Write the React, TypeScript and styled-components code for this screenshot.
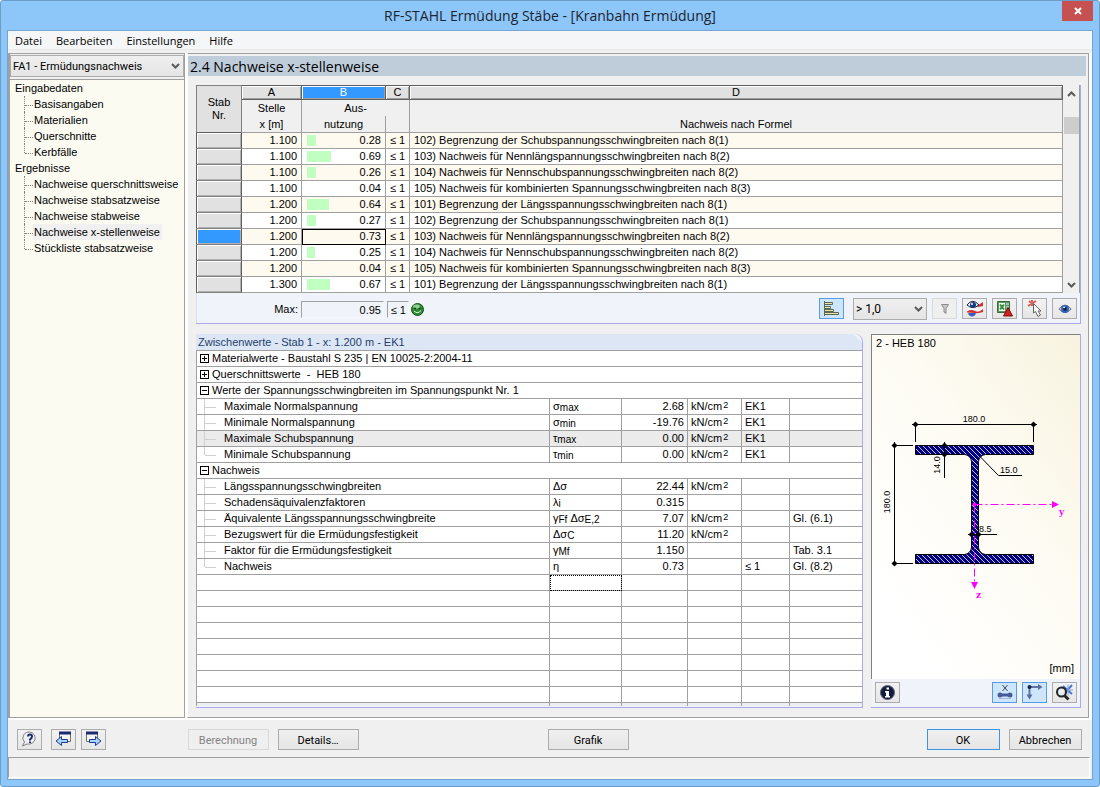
import React from "react";
import styled, { createGlobalStyle, css } from "styled-components";

const GlobalStyle = createGlobalStyle`
  * { box-sizing: border-box; }
  body {
    margin: 0;
    background: #ffffff;
    color: #000000;
    font-family: "Liberation Sans", Arial, sans-serif;
    font-size: 11px;
    line-height: 15px;
  }
  button, select { font: inherit; color: inherit; }
`;

const uiFont = css`
  font-family: "Open Sans", "Noto Sans", sans-serif;
`;

const controlFont = css`
  font-family: Roboto, "Liberation Sans", sans-serif;
`;

/* ---------- window frame ---------- */

const Frame = styled.div`
  min-height: 100vh;
  display: flex;
  flex-direction: column;
  background: #8dc6f9;
  border: 1px solid #6b9dc9;
  border-radius: 3px;
  padding: 0 6px 6px;
`;

const TitleBar = styled.header`
  height: 29px;
  display: grid;
  grid-template-columns: 31px 1fr 31px;
  align-items: start;
`;

const WindowTitle = styled.h1`
  ${uiFont}
  grid-column: 2;
  margin: 0;
  font-size: 14px;
  font-weight: 400;
  line-height: 29px;
  text-align: center;
  white-space: nowrap;
  color: #1c2430;
`;

const CloseButton = styled.button`
  height: 20px;
  padding: 0;
  border: 0;
  background: #c75050;
  display: flex;
  align-items: center;
  justify-content: center;
`;

const Client = styled.div`
  flex: 1;
  display: flex;
  flex-direction: column;
  border: 1px solid #74a5d0;
  background: #f0f0f0;
`;

const MenuBar = styled.nav`
  ${uiFont}
  height: 19px;
  display: flex;
  align-items: center;
  gap: 14px;
  padding: 2px 7px 0;
  background: #f5f6f7;
  border-bottom: 1px solid #e8e8e8;
`;

const MenuLink = styled.a`
  font-size: 11px;
  line-height: 16px;
  color: #000000;
  text-decoration: none;
`;

const Workspace = styled.div`
  flex: 1;
  display: flex;
  gap: 2px;
  margin-top: 3px;
  padding-right: 3px;
  background: #ffffff;
  border-bottom: 2px solid #ffffff;
`;

/* ---------- navigation ---------- */

const Sidebar = styled.aside`
  width: 177px;
  flex: none;
  display: flex;
  flex-direction: column;
  background: #f0f0f0;
  border: 1px solid #a0a0a0;
  border-left-width: 2px;
`;

const SelectBox = styled.div<{ $width?: number }>`
  position: relative;
  width: ${(p) => (p.$width ? `${p.$width}px` : "100%")};
  height: 22px;
  svg {
    position: absolute;
    right: 4px;
    top: 8px;
    pointer-events: none;
  }
`;

const Select = styled.select<{ $large?: boolean }>`
  ${controlFont}
  appearance: none;
  width: 100%;
  height: 100%;
  margin: 0;
  padding: 1px 16px 0 2px;
  border: 1px solid #acacac;
  border-radius: 0;
  background: linear-gradient(#f0f0f0, #e4e4e4);
  font-size: ${(p) => (p.$large ? 12 : 11)}px;
`;

const CaseChooser = styled.div`
  padding: 1px 0 2px;
  border-bottom: 1px solid #a0a0a0;
`;

const Tree = styled.ul`
  flex: 1;
  margin: 0;
  padding: 0 0 0 5px;
  list-style: none;
  background: #fbfbf2;
  line-height: 16px;
`;

const Branch = styled.ul`
  margin: 0;
  padding: 0 0 0 9px;
  list-style: none;
`;

const Leaf = styled.li`
  display: flex;
  height: 16px;
`;

const Twig = styled.span<{ $last: boolean }>`
  width: 9px;
  height: ${(p) => (p.$last ? 9 : 16)}px;
  border-left: 1px dotted #808080;
  &::after {
    content: "";
    display: block;
    height: 9px;
    border-bottom: 1px dotted #808080;
  }
`;

const LeafLink = styled.a<{ $active: boolean }>`
  padding: 0 2px 0 1px;
  color: #000000;
  text-decoration: none;
  white-space: nowrap;
  background: ${(p) => (p.$active ? "#f0f0f0" : "transparent")};
`;

/* ---------- main panel ---------- */

const Main = styled.main`
  flex: 1;
  min-width: 0;
  display: flex;
  flex-direction: column;
  background: #f0f0f0;
  border-top: 1px solid #a0a0a0;
  border-right: 1px solid #a0a0a0;
  border-bottom: 1px solid #a0a0a0;
  border-left: 1px solid #ffffff;
`;

const Heading = styled.h2`
  ${uiFont}
  height: 20px;
  margin: 2px 2px 9px 0;
  padding-left: 2px;
  background: #bfcddb;
  font-size: 14px;
  font-weight: 400;
  line-height: 21px;
`;

const PanelArea = styled.div`
  flex: 1;
  display: flex;
  flex-direction: column;
  gap: 10px;
  padding: 0 7px 9px 8px;
`;

const ResultPanel = styled.section`
  background: #f0f4fa;
  border-right: 1px solid #a9a9ec;
  border-bottom: 1px solid #a9a9ec;
`;

const GridRow = styled.div`
  display: flex;
`;

const Grid = styled.table`
  width: 100%;
  table-layout: fixed;
  border-collapse: separate;
  border-spacing: 0;
  td, th {
    padding: 0;
    font-weight: 400;
    white-space: nowrap;
    overflow: hidden;
  }
`;

const LetterCell = styled.th<{ $active?: boolean }>`
  height: 15px;
  line-height: 13px;
  border: 1px solid #606060;
  border-left: 0;
  background: ${(p) => (p.$active ? "#3399ff" : "#e1e1e1")};
  color: ${(p) => (p.$active ? "#ffffff" : "#000000")};
  box-shadow: inset 1px 1px #ffffff, inset -1px -1px #a0a0a0;
`;

const CornerCell = styled.th`
  border: 1px solid #808080;
  border-bottom-color: #606060;
  background: #e1e1e1;
  line-height: 13px;
`;

const CaptionCell = styled.th<{ $bottom?: boolean }>`
  height: ${(p) => (p.$bottom ? 17 : 16)}px;
  line-height: 14px;
  background: #f0f0f0;
  border-right: 1px solid #a0a0a0;
  border-bottom: ${(p) => (p.$bottom ? "1px solid #a0a0a0" : "0")};
`;

const RowHead = styled.th<{ $active: boolean }>`
  height: 16px;
  background: ${(p) => (p.$active ? "#3399ff" : "#e1e1e1")};
  border: 1px solid #606060;
  border-top: 0;
  border-bottom-color: #808080;
  box-shadow: inset 1px 1px #ffffff, inset -1px -1px #b0b0b0;
`;

const Cell = styled.td<{ $odd: boolean; $align?: string; $current?: boolean }>`
  height: 16px;
  line-height: 15px;
  border-right: 1px solid #a0a0a0;
  border-bottom: 1px solid #a0a0a0;
  background: ${(p) => (p.$odd ? "#fffaf0" : "#ffffff")};
  text-align: ${(p) => p.$align ?? "left"};
  && {
    padding: 0 4px;
  }
  ${(p) => p.$current && "outline: 1px solid #000000; outline-offset: -1px;"}
`;

const Gauge = styled.div`
  display: flex;
  align-items: center;
  justify-content: space-between;
  padding-left: 1px;
`;

const GaugeBar = styled.span`
  height: 11px;
  background: #c0ffc0;
`;

const ScrollTrack = styled.div`
  width: 17px;
  flex: none;
  display: flex;
  flex-direction: column;
  align-items: center;
  padding: 6px 0 5px;
  background: #f0f0f0;
  border-right: 1px solid #a0a0a0;
`;

const ScrollThumb = styled.div`
  width: 15px;
  height: 17px;
  margin: 20px 0 auto;
  background: #cdcdcd;
`;

const Summary = styled.div`
  height: 30px;
  display: flex;
  align-items: center;
  padding: 2px 3px 0 0;
  border-left: 1px solid #d6e0f2;
`;

const SummaryLabel = styled.span`
  width: 101px;
  text-align: right;
`;

const SummaryField = styled.output<{ $width: number }>`
  width: ${(p) => p.$width}px;
  height: 17px;
  margin-left: 3px;
  padding-right: 2px;
  border: 1px solid #f8f8fc;
  border-top-color: #a0a0a0;
  border-left-color: #a0a0a0;
  text-align: right;
  line-height: 16px;
`;

const StatusIcon = styled.span`
  display: flex;
  margin-left: 2px;
`;

const Tools = styled.div`
  display: flex;
  gap: 5px;
  margin-left: auto;
`;

const IconButton = styled.button<{ $pressed?: boolean }>`
  width: 25px;
  height: 21px;
  padding: 0;
  display: flex;
  align-items: center;
  justify-content: center;
  border: 1px solid ${(p) => (p.$pressed ? "#569de5" : "#acacac")};
  background: ${(p) => (p.$pressed ? "#cde6fc" : "linear-gradient(#f2f2f2, #e6e6e6)")};
  &:disabled {
    border-color: #d9d9d9;
    background: #efefef;
  }
`;

const FilterBox = styled.div`
  margin: 0 0 0 4px;
`;

/* ---------- intermediate values ---------- */

const LowerArea = styled.div`
  flex: 1;
  display: flex;
  gap: 8px;
`;

const DetailPanel = styled.section`
  flex: 1;
  min-width: 0;
  padding-bottom: 1px;
  border-right: 1px solid #a9a9ec;
  border-bottom: 1px solid #a9a9ec;
  border-top-right-radius: 8px;
  background: #f0f4fa;
`;

const DetailTitle = styled.h3`
  height: 17px;
  margin: 0;
  padding-left: 2px;
  background: #dce6f4;
  border-bottom: 1px solid #a0a0a0;
  color: #1f3f6e;
  font-size: 11px;
  font-weight: 400;
  line-height: 17px;
  clip-path: polygon(0 0, calc(100% - 9px) 0, 100% 9px, 100% 100%, 0 100%);
`;

const DetailCell = styled.td<{ $shaded?: boolean; $align?: string; $focus?: boolean; $last?: boolean }>`
  height: 16px;
  line-height: 15px;
  vertical-align: top;
  border-right: ${(p) => (p.$last ? "0" : "1px solid #a0a0a0")};
  border-bottom: 1px solid #a0a0a0;
  background: ${(p) => (p.$shaded ? "#ebebeb" : "#ffffff")};
  text-align: ${(p) => p.$align ?? "left"};
  && {
    padding: 0 3px;
  }
  &:first-child {
    border-left: 1px solid #a0a0a0;
  }
  ${(p) => p.$focus && "outline: 1px dotted #000000; outline-offset: -1px;"}
  sup, sub {
    line-height: 1px;
    vertical-align: baseline;
    position: relative;
  }
  sup { bottom: 2px; font-size: 9px; padding-left: 1px; }
  sub { top: 1px; font-size: 10px; }
`;

const FooterCell = styled(DetailCell)`
  height: 3px;
  border-bottom: 0;
  background: #eceff2;
`;

const GroupLine = styled.div`
  display: flex;
  align-items: center;
  gap: 3px;
  height: 15px;
`;

const GroupName = styled.span`
  white-space: pre;
`;

const ItemLine = styled.div`
  display: flex;
  height: 15px;
  padding-left: 4px;
`;

const ItemTwig = styled.span<{ $last: boolean }>`
  width: 20px;
  height: ${(p) => (p.$last ? 8 : 15)}px;
  border-left: 1px solid #d0d0d0;
  &::after {
    content: "";
    display: block;
    width: 11px;
    height: 8px;
    border-bottom: 1px solid #d0d0d0;
  }
`;

const Expander = styled.button`
  width: 9px;
  height: 9px;
  flex: none;
  padding: 0;
  border: 1px solid #000000;
  background: #ffffff;
  display: flex;
  align-items: center;
  justify-content: center;
`;

/* ---------- cross-section preview ---------- */

const Preview = styled.section`
  width: 210px;
  flex: none;
  display: flex;
  flex-direction: column;
  border-right: 1px solid #a9a9ec;
  border-bottom: 1px solid #a9a9ec;
`;

const Canvas = styled.div`
  flex: 1;
  display: flex;
  flex-direction: column;
  border-top: 1px solid #808080;
  border-left: 1px solid #808080;
  background: linear-gradient(235deg, #f8f3df 0%, #fdfbf2 40%, #ffffff 85%);
`;

const CanvasTitle = styled.div`
  padding: 1px 4px;
  height: 65px;
`;

const Unit = styled.div`
  margin-top: auto;
  padding: 0 6px 3px;
  text-align: right;
`;

const PreviewTools = styled.div`
  height: 28px;
  display: flex;
  align-items: center;
  gap: 5px;
  padding: 0 3px 2px;
  background: #f0f4fa;
  border-left: 1px solid #f0f0f0;
`;

const PushedRight = styled.div`
  display: flex;
  gap: 5px;
  margin-left: auto;
`;

/* ---------- footer ---------- */

const Footer = styled.footer`
  height: 37px;
  display: grid;
  grid-template-columns: 171px 360px 1fr auto;
  align-items: center;
  padding: 1px 10px 0 9px;
`;

const ButtonGroup = styled.div`
  display: flex;
  gap: 9px;
`;

const StepButtons = styled.div`
  display: flex;
  gap: 5px;
`;

const PushButton = styled.button<{ $width: number; $default?: boolean }>`
  ${controlFont}
  width: ${(p) => p.$width}px;
  height: 21px;
  padding: 2px 1px 0 0;
  font-size: 11px;
  line-height: 17px;
  border: 1px solid ${(p) => (p.$default ? "#3c94e8" : "#acacac")};
  background: linear-gradient(#f0f0f0, #e5e5e5);
  &:disabled {
    color: #838383;
    border-color: #d9d9d9;
    background: #efefef;
  }
`;

const StatusBar = styled.div`
  height: 21px;
  margin-right: 2px;
  margin-bottom: 1px;
  border: 1px solid #a0a0a0;
  border-right-color: #ffffff;
  border-bottom-color: #ffffff;
`;

/* ---------- icons ---------- */

const Chevron = ({ up }: { up?: boolean }) => (
  <svg width="9" height="6" viewBox="0 0 9 6" aria-hidden="true">
    <path d={up ? "M1 5L4.500 1.500L8 5" : "M1 1L4.500 4.500L8 1"} fill="none" stroke="#5a5a5a" strokeWidth="2" />
  </svg>
);

const EyeIcon = () => (
  <svg width="14" height="14" viewBox="0 0 16 16" aria-hidden="true">
    <path d="M1 8Q8 -1 15 8Q8 16 1 8Z" fill="#c9d3e2" stroke="#5a606c" strokeWidth="1" />
    <circle cx="8" cy="8" r="4.500" fill="#2f62b8" />
    <circle cx="8" cy="8" r="2" fill="#0c1c40" />
    <circle cx="7" cy="6" r="1" fill="#ffffff" />
  </svg>
);

const BarsIcon = () => (
  <svg width="17" height="16" viewBox="0 0 17 16" aria-hidden="true">
    <g fill="#ece6a0" stroke="#5a6858">
      <path d="M1.500 1.500h8v2h-8zM1.500 5.500h6v2h-6zM1.500 8.500h9v2h-9zM1.500 11.500h14v2h-14z" />
    </g>
    <path d="M1.500 0v15" stroke="#5a6858" />
  </svg>
);

const FunnelIcon = () => (
  <svg width="8" height="10" viewBox="0 0 8 10" aria-hidden="true">
    <path d="M0.500 0.500h7L5 4.500V9.500L3 8V4.500z" fill="#c8c8c8" stroke="#8c8c8c" />
  </svg>
);

const EyeWavesIcon = () => (
  <svg width="18" height="17" viewBox="0 0 18 17" aria-hidden="true">
    <path d="M11 6L17 2V6L12 7Z" fill="#d03030" />
    <path d="M1 11.500Q5 9 9 11T17 9V12Q13 13.500 9 13T1 12.500Z" fill="#d03030" />
    <path d="M1 10Q5 8 9 9.500T17 8" fill="none" stroke="#ffffff" strokeWidth="1" />
    <path d="M2 13H10Q9 16.500 6 16.500T2 13Z" fill="#3c5ec0" />
    <path d="M1 5Q6.500 -2.500 13 5Q6.500 10 1 5Z" fill="#e4e8f0" stroke="#1c2440" />
    <circle cx="7" cy="5" r="3" fill="#123a80" />
    <circle cx="6" cy="4" r="1" fill="#ffffff" />
  </svg>
);

const SheetIcon = () => (
  <svg width="17" height="17" viewBox="0 0 17 17" aria-hidden="true">
    <path d="M1.500 1.500h12v11h-12z" fill="#5a9a60" stroke="#386c3c" />
    <path d="M10 4h3M10 7h3M10 10h3" stroke="#e8f4e8" />
    <path d="M3 3h6v8H3z" fill="#f4fbf4" />
    <path d="M4 4.500l4 5M8 4.500l-4 5" stroke="#2f8a3c" strokeWidth="2" />
    <path d="M12 7.500l4.500 8.500H7.500z" fill="#d42020" stroke="#7c1010" strokeWidth="1" />
  </svg>
);

const PickIcon = () => (
  <svg width="18" height="17" viewBox="0 0 18 17" aria-hidden="true">
    <path d="M3 1l6 5M10 1L2 6M6 0v6" stroke="#d86058" strokeWidth="2" />
    <path d="M7.500 3.500v9.500l2-1.500 2.500 5 2.500-1.500-2.500-4h3z" fill="#ffffff" stroke="#606060" />
  </svg>
);

const SmileyIcon = () => (
  <svg width="13" height="13" viewBox="0 0 13 13" aria-hidden="true">
    <circle cx="6.500" cy="6.500" r="6" fill="#2c8a34" stroke="#125018" />
    <ellipse cx="5.500" cy="3.500" rx="3.500" ry="2" fill="#8fd08a" />
    <circle cx="4" cy="5.500" r="1" fill="#0c3a10" />
    <circle cx="8.500" cy="5.500" r="1" fill="#0c3a10" />
    <path d="M3 8Q6.500 11.500 10 7.500" fill="none" stroke="#e8ffe8" />
  </svg>
);

const InfoIcon = () => (
  <svg width="15" height="15" viewBox="0 0 15 15" aria-hidden="true">
    <circle cx="7.500" cy="7.500" r="7" fill="#141c3c" stroke="#5a6078" />
    <path d="M6.500 2.500h2.500v2H6.500zM5 6h4v5h1v1.500H5V11h1V7.500H5z" fill="#ffffff" />
  </svg>
);

const DimensionIcon = () => (
  <svg width="16" height="16" viewBox="0 0 16 16" aria-hidden="true">
    <path d="M5.500 1l5 6M10.500 1l-5 6" stroke="#404858" />
    <path d="M3 11h10" stroke="#4258a4" strokeWidth="3" />
    <circle cx="3" cy="11" r="2.500" fill="#4a5c98" />
    <circle cx="13" cy="11" r="2.500" fill="#4a5c98" />
    <path d="M2 14.500h12" stroke="#a8b4d8" />
  </svg>
);

const AxesIcon = () => (
  <svg width="17" height="16" viewBox="0 0 17 16" aria-hidden="true">
    <path d="M3.500 3h9M3.500 3v9" stroke="#6474a4" strokeWidth="2" />
    <path d="M12 0l4.500 3-4.500 3zM0.500 10.500h6l-3 5z" fill="#5a6a9c" />
    <circle cx="3.500" cy="3" r="2" fill="#1c2440" />
  </svg>
);

const ZoomAllIcon = () => (
  <svg width="17" height="17" viewBox="0 0 17 17" aria-hidden="true">
    <path d="M16 1L8 10M7 2l9 8" stroke="#4a78cc" strokeWidth="2" />
    <path d="M12 0.500v11M17 6H8" stroke="#7ea0e0" strokeWidth="1" />
    <circle cx="5.500" cy="8" r="4.500" fill="#e8eef8" fillOpacity="0.800" stroke="#242424" strokeWidth="2" />
    <path d="M8.500 11.500l4 4" stroke="#242424" strokeWidth="3" />
  </svg>
);

const HelpIcon = () => (
  <svg width="17" height="16" viewBox="0 0 17 16" aria-hidden="true">
    <path d="M9 1a6.500 6 0 1 1-3 12L1.500 15 3.500 11A6.500 6 0 0 1 9 1Z" fill="#eef0f4" stroke="#808080" />
    <path d="M7 5.500Q7 3.500 9 3.500T11 5.500Q11 7 9 8.500V9.500" fill="none" stroke="#1e2c6c" strokeWidth="2" />
    <path d="M8 10.500h2v1.500H8z" fill="#1e2c6c" />
  </svg>
);

const TableStepIcon = ({ forward }: { forward?: boolean }) => (
  <svg width="17" height="16" viewBox="0 0 17 16" aria-hidden="true">
    <path
      d={forward ? "M1.500 1.500h11v9h-11z" : "M4.500 1.500h11v9h-11z"}
      fill="#f4f4f4"
      stroke="#707070"
    />
    <path d={forward ? "M1 2h12" : "M4 2h12"} stroke="#1c2a70" strokeWidth="3" />
    <path
      d={
        forward
          ? "M4.500 8.500h6V5.500l5.500 4.500-5.500 4.500v-3h-6z"
          : "M12.500 8.500h-6V5.500L1 10l5.500 4.500v-3h6z"
      }
      fill="#a8d4fa"
      stroke="#1c3a94"
    />
  </svg>
);

/* ---------- data ---------- */

const navigation = [
  { title: "Eingabedaten", items: ["Basisangaben", "Materialien", "Querschnitte", "Kerbfälle"] },
  {
    title: "Ergebnisse",
    items: [
      "Nachweise querschnittsweise",
      "Nachweise stabsatzweise",
      "Nachweise stabweise",
      "Nachweise x-stellenweise",
      "Stückliste stabsatzweise",
    ],
  },
];

const formulas: Record<number, string> = {
  101: "Begrenzung der Längsspannungsschwingbreiten nach 8(1)",
  102: "Begrenzung der Schubspannungsschwingbreiten nach 8(1)",
  103: "Nachweis für Nennlängspannungsschwingbreiten nach 8(2)",
  104: "Nachweis für Nennschubspannungsschwingbreiten nach 8(2)",
  105: "Nachweis für kombinierten Spannungsschwingbreiten nach 8(3)",
};

const results: { x: string; ratio: string; code: number; current?: boolean }[] = [
  { x: "1.100", ratio: "0.28", code: 102 },
  { x: "1.100", ratio: "0.69", code: 103 },
  { x: "1.100", ratio: "0.26", code: 104 },
  { x: "1.100", ratio: "0.04", code: 105 },
  { x: "1.200", ratio: "0.64", code: 101 },
  { x: "1.200", ratio: "0.27", code: 102 },
  { x: "1.200", ratio: "0.73", code: 103, current: true },
  { x: "1.200", ratio: "0.25", code: 104 },
  { x: "1.200", ratio: "0.04", code: 105 },
  { x: "1.300", ratio: "0.67", code: 101 },
];

const barWidth = (ratio: number) => (ratio < 0.1 ? 0 : Math.round(ratio * 35 - 0.5));

type Item = {
  name: string;
  symbol: React.ReactNode;
  value: string;
  stress?: boolean;
  note?: string;
  ref?: string;
  shaded?: boolean;
};

const groups: { title: string; open: boolean; items: Item[] }[] = [
  { title: "Materialwerte - Baustahl S 235 | EN 10025-2:2004-11", open: false, items: [] },
  { title: "Querschnittswerte  -  HEB 180", open: false, items: [] },
  {
    title: "Werte der Spannungsschwingbreiten im Spannungspunkt Nr. 1",
    open: true,
    items: [
      { name: "Maximale Normalspannung", symbol: <>σ<sub>max</sub></>, value: "2.68", stress: true, note: "EK1" },
      { name: "Minimale Normalspannung", symbol: <>σ<sub>min</sub></>, value: "-19.76", stress: true, note: "EK1" },
      { name: "Maximale Schubspannung", symbol: <>τ<sub>max</sub></>, value: "0.00", stress: true, note: "EK1", shaded: true },
      { name: "Minimale Schubspannung", symbol: <>τ<sub>min</sub></>, value: "0.00", stress: true, note: "EK1" },
    ],
  },
  {
    title: "Nachweis",
    open: true,
    items: [
      { name: "Längsspannungsschwingbreiten", symbol: "Δσ", value: "22.44", stress: true },
      { name: "Schadensäquivalenzfaktoren", symbol: <>λ<sub>i</sub></>, value: "0.315" },
      { name: "Äquivalente Längsspannungsschwingbreite", symbol: <>γ<sub>Ff</sub> Δσ<sub>E,2</sub></>, value: "7.07", stress: true, ref: "Gl. (6.1)" },
      { name: "Bezugswert für die Ermüdungsfestigkeit", symbol: <>Δσ<sub>C</sub></>, value: "11.20", stress: true },
      { name: "Faktor für die Ermüdungsfestigkeit", symbol: <>γ<sub>Mf</sub></>, value: "1.150", ref: "Tab. 3.1" },
      { name: "Nachweis", symbol: "η", value: "0.73", note: "≤ 1", ref: "Gl. (8.2)" },
    ],
  },
];

/* ---------- parts ---------- */

const Navigation = () => (
  <Sidebar>
    <CaseChooser>
      <SelectBox>
        <Select aria-label="Bemessungsfall">
          <option>FA1 - Ermüdungsnachweis</option>
        </Select>
        <Chevron />
      </SelectBox>
    </CaseChooser>
    <Tree>
      {navigation.map((group) => (
        <li key={group.title}>
          {group.title}
          <Branch>
            {group.items.map((item, i) => (
              <Leaf key={item}>
                <Twig $last={i === group.items.length - 1} />
                <LeafLink href="#" $active={item === "Nachweise x-stellenweise"}>
                  {item}
                </LeafLink>
              </Leaf>
            ))}
          </Branch>
        </li>
      ))}
    </Tree>
  </Sidebar>
);

const ResultGrid = () => (
  <Grid>
    <colgroup>
      <col style={{ width: 46 }} />
      <col style={{ width: 60 }} />
      <col style={{ width: 84 }} />
      <col style={{ width: 24 }} />
      <col />
    </colgroup>
    <thead>
      <tr>
        <CornerCell rowSpan={3}>
          Stab
          <br />
          Nr.
        </CornerCell>
        <LetterCell>A</LetterCell>
        <LetterCell $active>B</LetterCell>
        <LetterCell>C</LetterCell>
        <LetterCell>D</LetterCell>
      </tr>
      <tr>
        <CaptionCell>Stelle</CaptionCell>
        <CaptionCell colSpan={2}>Aus-</CaptionCell>
        <CaptionCell />
      </tr>
      <tr>
        <CaptionCell $bottom>x [m]</CaptionCell>
        <CaptionCell $bottom>nutzung</CaptionCell>
        <CaptionCell $bottom />
        <CaptionCell $bottom>Nachweis nach Formel</CaptionCell>
      </tr>
    </thead>
    <tbody>
      {results.map((r, i) => (
        <tr key={i}>
          <RowHead $active={!!r.current} />
          <Cell $odd={i % 2 === 0} $align="right">{r.x}</Cell>
          <Cell $odd={i % 2 === 0} $align="right" $current={r.current}>
            <Gauge>
              <GaugeBar style={{ width: r.current ? 0 : barWidth(Number(r.ratio)) }} />
              {r.ratio}
            </Gauge>
          </Cell>
          <Cell $odd={i % 2 === 0}>≤ 1</Cell>
          <Cell $odd={i % 2 === 0}>
            {r.code}) {formulas[r.code]}
          </Cell>
        </tr>
      ))}
    </tbody>
  </Grid>
);

const Results = () => (
  <ResultPanel>
    <GridRow>
      <ResultGrid />
      <ScrollTrack>
        <Chevron up />
        <ScrollThumb />
        <Chevron />
      </ScrollTrack>
    </GridRow>
    <Summary>
      <SummaryLabel>Max:</SummaryLabel>
      <SummaryField $width={83}>0.95</SummaryField>
      <SummaryField $width={22}>≤ 1</SummaryField>
      <StatusIcon>
        <SmileyIcon />
      </StatusIcon>
      <Tools>
        <IconButton $pressed aria-label="Farbbalken"><BarsIcon /></IconButton>
        <FilterBox>
          <SelectBox $width={74}>
            <Select $large aria-label="Filter">
              <option>&gt; 1,0</option>
            </Select>
            <Chevron />
          </SelectBox>
        </FilterBox>
        <IconButton disabled aria-label="Filtern"><FunnelIcon /></IconButton>
        <IconButton aria-label="Ergebnisverläufe"><EyeWavesIcon /></IconButton>
        <IconButton aria-label="Export"><SheetIcon /></IconButton>
        <IconButton aria-label="Auswahl"><PickIcon /></IconButton>
        <IconButton aria-label="Ansicht"><EyeIcon /></IconButton>
      </Tools>
    </Summary>
  </ResultPanel>
);

const DetailGrid = () => (
  <Grid>
    <colgroup>
      <col style={{ width: 354 }} />
      <col style={{ width: 72 }} />
      <col style={{ width: 66 }} />
      <col style={{ width: 54 }} />
      <col style={{ width: 48 }} />
      <col />
    </colgroup>
    <tbody>
      {groups.map((g) => (
        <React.Fragment key={g.title}>
          <tr>
            <DetailCell colSpan={6} $last>
              <GroupLine>
                <Expander aria-label={g.title}>
                  <svg width="7" height="7" viewBox="0 0 7 7" aria-hidden="true">
                    <path d={g.open ? "M1 3.500h5" : "M1 3.500h5M3.500 1v5"} stroke="#000000" />
                  </svg>
                </Expander>
                <GroupName>{g.title}</GroupName>
              </GroupLine>
            </DetailCell>
          </tr>
          {g.items.map((item, i) => (
            <tr key={item.name}>
              <DetailCell $shaded={item.shaded}>
                <ItemLine>
                  <ItemTwig $last={i === g.items.length - 1} />
                  {item.name}
                </ItemLine>
              </DetailCell>
              <DetailCell $shaded={item.shaded}>{item.symbol}</DetailCell>
              <DetailCell $shaded={item.shaded} $align="right">{item.value}</DetailCell>
              <DetailCell $shaded={item.shaded}>{item.stress && <>kN/cm<sup>2</sup></>}</DetailCell>
              <DetailCell $shaded={item.shaded}>{item.note}</DetailCell>
              <DetailCell $shaded={item.shaded} $last>{item.ref}</DetailCell>
            </tr>
          ))}
        </React.Fragment>
      ))}
      {Array.from({ length: 8 }, (_, row) => (
        <tr key={row}>
          {Array.from({ length: 6 }, (_, col) => (
            <DetailCell key={col} $focus={row === 0 && col === 1} $last={col === 5} />
          ))}
        </tr>
      ))}
      <tr>
        {Array.from({ length: 6 }, (_, col) => (
          <FooterCell key={col} $last={col === 5} />
        ))}
      </tr>
    </tbody>
  </Grid>
);

const Dot = ({ x, y }: { x: number; y: number }) => (
  <path d={`M${x - 3} ${y}L${x} ${y - 3}L${x + 3} ${y}L${x} ${y + 3}Z`} />
);

const SectionDrawing = () => (
  <svg width="208" height="204" viewBox="0 0 208 204" role="img" aria-label="HEB 180">
    <defs>
      <pattern id="hatch" width="5" height="5" patternUnits="userSpaceOnUse">
        <rect width="5" height="5" fill="#000080" />
        <path d="M-1 -1L6 6M-1 4L1 6M4 -1L6 1" stroke="#c0c0e8" strokeWidth="1" />
      </pattern>
    </defs>
    <path
      d="M43.500 45.500H161.500V54.500H113.500A7.500 7.500 0 0 0 106.500 61.500V147.500A7.500 7.500 0 0 0 113.500 154.500H161.500V163.500H43.500V154.500H92.500A7.500 7.500 0 0 0 99.500 147.500V61.500A7.500 7.500 0 0 0 92.500 54.500H43.500Z"
      fill="url(#hatch)"
      stroke="#000000"
    />
    <g stroke="#000000" fill="none">
      <path d="M40 24.500H165M43.500 22V42M161.500 22V42" />
      <path d="M22.500 42V166M20 45.500H41M20 163.500H41" />
      <path d="M72.500 42V78" />
      <path d="M108.500 57L126.500 75.500H150" />
      <path d="M96 134.500H125" />
    </g>
    <g fill="#000000">
      <Dot x={43.5} y={24.5} />
      <Dot x={161.5} y={24.5} />
      <Dot x={22.5} y={45.5} />
      <Dot x={22.5} y={163.5} />
      <Dot x={72.5} y={45.5} />
      <Dot x={72.5} y={54.5} />
      <Dot x={99.5} y={134.5} />
      <Dot x={106.5} y={134.5} />
    </g>
    <g fontFamily="Liberation Sans" fontSize="9" fill="#000000">
      <text x="102" y="22" textAnchor="middle">180.0</text>
      <text x="128" y="73">15.0</text>
      <text x="107" y="132">8.5</text>
      <text transform="translate(18 102) rotate(-90)" textAnchor="middle">180.0</text>
      <text transform="translate(68 65) rotate(-90)" textAnchor="middle">14.0</text>
    </g>
    <g stroke="#ff00ff" fill="none" strokeDasharray="8 3 2 3">
      <path d="M102.500 104.500H180" />
      <path d="M102.500 104.500V182" />
    </g>
    <g fill="#ff00ff">
      <circle cx="102.500" cy="104.500" r="2" />
      <path d="M180 101L187 104.500L180 108Z" />
      <path d="M99 182H106L102.500 189Z" />
      <g fontFamily="DejaVu Serif" fontSize="9" fontWeight="700">
        <text x="187" y="115">y</text>
        <text x="104" y="198">z</text>
      </g>
    </g>
  </svg>
);

const SectionPreview = () => (
  <Preview>
    <Canvas>
      <CanvasTitle>2 - HEB 180</CanvasTitle>
      <SectionDrawing />
      <Unit>[mm]</Unit>
    </Canvas>
    <PreviewTools>
      <IconButton aria-label="Info"><InfoIcon /></IconButton>
      <PushedRight>
        <IconButton $pressed aria-label="Bemaßung"><DimensionIcon /></IconButton>
        <IconButton $pressed aria-label="Achsen"><AxesIcon /></IconButton>
        <IconButton aria-label="Alles zeigen"><ZoomAllIcon /></IconButton>
      </PushedRight>
    </PreviewTools>
  </Preview>
);

export default function App() {
  return (
    <>
      <GlobalStyle />
      <Frame>
        <TitleBar>
          <WindowTitle>RF-STAHL Ermüdung Stäbe - [Kranbahn Ermüdung]</WindowTitle>
          <CloseButton aria-label="Schließen">
            <svg width="8" height="8" viewBox="0 0 8 8" aria-hidden="true">
              <path d="M1 1L7 7M7 1L1 7" stroke="#ffffff" strokeWidth="2" />
            </svg>
          </CloseButton>
        </TitleBar>
        <Client>
          <MenuBar>
            {["Datei", "Bearbeiten", "Einstellungen", "Hilfe"].map((m) => (
              <MenuLink key={m} href="#">{m}</MenuLink>
            ))}
          </MenuBar>
          <Workspace>
            <Navigation />
            <Main>
              <Heading>2.4 Nachweise x-stellenweise</Heading>
              <PanelArea>
                <Results />
                <LowerArea>
                  <DetailPanel>
                    <DetailTitle>Zwischenwerte - Stab 1 - x: 1.200 m - EK1</DetailTitle>
                    <DetailGrid />
                  </DetailPanel>
                  <SectionPreview />
                </LowerArea>
              </PanelArea>
            </Main>
          </Workspace>
          <Footer>
            <ButtonGroup>
              <IconButton aria-label="Hilfe"><HelpIcon /></IconButton>
              <StepButtons>
                <IconButton aria-label="Vorherige Maske"><TableStepIcon /></IconButton>
                <IconButton aria-label="Nächste Maske"><TableStepIcon forward /></IconButton>
              </StepButtons>
            </ButtonGroup>
            <ButtonGroup>
              <PushButton $width={81} disabled>Berechnung</PushButton>
              <PushButton $width={81}>Details…</PushButton>
            </ButtonGroup>
            <div>
              <PushButton $width={81}>Grafik</PushButton>
            </div>
            <ButtonGroup>
              <PushButton $width={73} $default>OK</PushButton>
              <PushButton $width={73}>Abbrechen</PushButton>
            </ButtonGroup>
          </Footer>
          <StatusBar />
        </Client>
      </Frame>
    </>
  );
}
